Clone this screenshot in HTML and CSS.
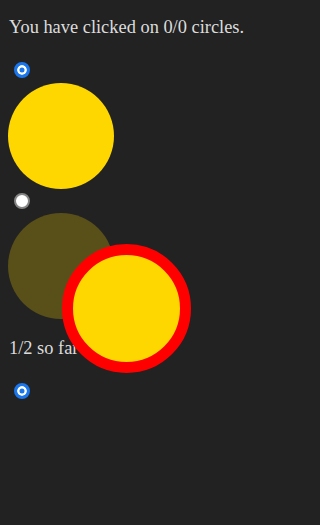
FILE: index.html
```html
<!DOCTYPE html>
<html>
<head>
<meta charset="utf-8">
<link rel="stylesheet" href="styles.css">
</head>
<body>
<div class="page">
  <p class="title">You have clicked on 0/0 circles.</p>
  <input class="radio radio-first" type="radio" name="r1" checked>
  <div class="circle"></div>
  <input class="radio radio-mid" type="radio" name="r2">
  <div class="circle circle-dim"></div>
  <p class="progress">1/2 so far</p>
  <input class="radio radio-last" type="radio" name="r3" checked>
</div>
<div class="circle-active"></div>
</body>
</html>
```

FILE: styles.css
```css
html, body {
  margin: 0;
  padding: 0;
  background: #222222;
}
body {
  width: 256px;
  height: 525px;
  overflow: hidden;
  position: relative;
  color: #dcdcdc;
  font-family: "Liberation Serif", "Times New Roman", serif;
  font-size: 18.4px;
}
.page {
  display: flex;
  flex-direction: column;
  align-items: flex-start;
  padding: 0 9px;
}
.title {
  margin: 17px 0 0 0;
  line-height: 21px;
  white-space: nowrap;
}
.progress {
  margin: 19px 0 0 0;
  line-height: 21px;
}
.radio {
  appearance: none;
  -webkit-appearance: none;
  display: block;
  box-sizing: border-box;
  width: 16px;
  height: 16px;
  margin: 4px 0 0 5px;
  border-radius: 50%;
  border: 2px solid #858585;
  background: #ffffff;
}
.radio:checked {
  border: 3px solid #1a76ec;
  background: #1a76ec;
  box-shadow: inset 0 0 0 2.5px #ffffff;
}
.radio-first,
.radio-last {
  margin-top: 24px;
}
.circle {
  width: 106px;
  height: 106px;
  border-radius: 50%;
  background: #ffd700;
  margin: 5px 0 0 -1px;
}
.circle-dim {
  margin-top: 4px;
  opacity: 0.25;
}
.circle-active {
  position: absolute;
  left: 62px;
  top: 244px;
  width: 107px;
  height: 107px;
  border: 11.5px solid #ff0000;
  border-radius: 50%;
  background: #ffd700;
}
```
